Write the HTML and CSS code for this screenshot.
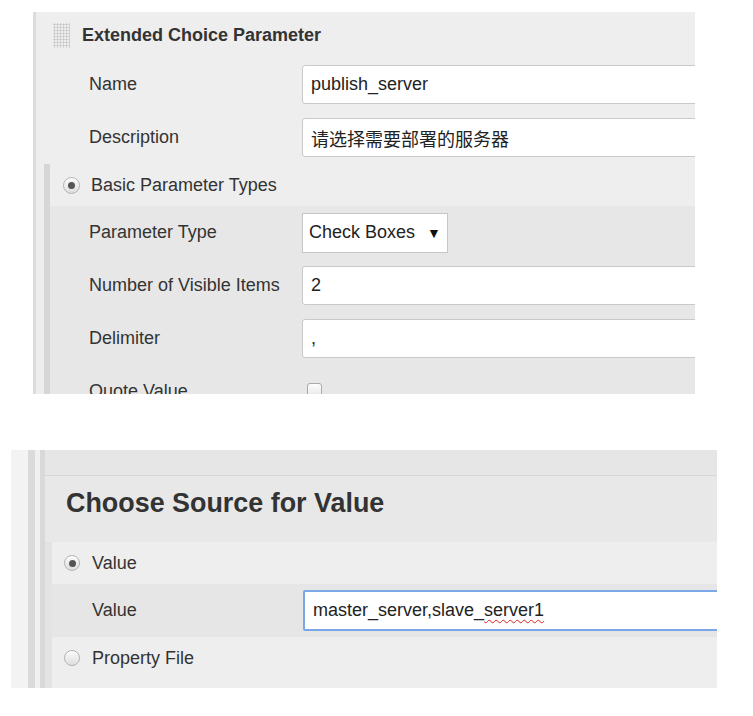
FILE: index.html
```html
<!DOCTYPE html>
<html lang="en">
<head>
<meta charset="utf-8">
<title>Extended Choice Parameter</title>
<link rel="stylesheet" href="styles.css">
</head>
<body>
<div class="page">
  <section class="panel panel-a">
    <div class="hdr">
      <span class="grip"></span>
      <span class="hdr-title">Extended Choice Parameter</span>
    </div>
    <div class="row row-a">
      <div class="lbl">Name</div>
      <div class="field">publish_server</div>
    </div>
    <div class="row row-a">
      <div class="lbl">Description</div>
      <div class="field">请选择需要部署的服务器</div>
    </div>
    <div class="nest-a">
      <div class="radio-row radio-row-a">
        <span class="radio checked"></span>
        <span>Basic Parameter Types</span>
      </div>
      <div class="sub-a">
        <div class="row row-sub">
          <div class="lbl">Parameter Type</div>
          <div class="select"><span>Check Boxes</span><span class="arrow">&#9660;</span></div>
        </div>
        <div class="row row-sub">
          <div class="lbl">Number of Visible Items</div>
          <div class="field">2</div>
        </div>
        <div class="row row-sub">
          <div class="lbl">Delimiter</div>
          <div class="field">,</div>
        </div>
        <div class="row row-sub">
          <div class="lbl">Quote Value</div>
          <div class="check-cell"><span class="checkbox"></span></div>
        </div>
      </div>
    </div>
  </section>

  <section class="panel panel-b">
    <div class="b-n1">
      <div class="b-n2">
        <div class="strip"></div>
        <div class="b-title">Choose Source for Value</div>
        <div class="b-n3">
          <div class="radio-row radio-row-b">
            <span class="radio checked"></span>
            <span>Value</span>
          </div>
          <div class="row row-b">
            <div class="lbl">Value</div>
            <div class="field field-focus">master_server,slave_<span class="spell">server1</span></div>
          </div>
          <div class="radio-row radio-row-b">
            <span class="radio"></span>
            <span>Property File</span>
          </div>
        </div>
      </div>
    </div>
  </section>
</div>
</body>
</html>
```

FILE: styles.css
```css
* { box-sizing: border-box; }

html, body {
  margin: 0;
  padding: 0;
  background: #ffffff;
}

body {
  font-family: "Liberation Sans", Arial, "Noto Sans CJK SC", sans-serif;
  font-size: 18px;
  color: #333333;
}

.page {
  padding-top: 12px;
  display: flex;
  flex-direction: column;
  align-items: flex-start;
}

.panel {
  overflow: hidden;
}

/* ---------- Panel A ---------- */
.panel-a {
  margin-left: 33px;
  width: 662px;
  height: 382px;
  background: #eeeeee;
  border-left: 3px solid #dcdcdc;
}

.hdr {
  height: 46px;
  display: flex;
  align-items: center;
  padding-left: 17px;
  gap: 12px;
}

.grip {
  width: 17px;
  height: 25px;
  margin-top: 1px;
  background-image: radial-gradient(circle, #c9c9c9 0.9px, transparent 1.3px);
  background-size: 3px 3px;
  background-position: 0 0;
}

.hdr-title {
  font-weight: bold;
  font-size: 18px;
  color: #333333;
}

.row {
  display: grid;
  align-items: center;
  height: 53px;
}

.row-a {
  grid-template-columns: 266px 1fr;
}

.row-a .lbl { padding-left: 53px; }

.field {
  width: 560px;
  height: 39px;
  background: #ffffff;
  border: 1px solid #c9c9c9;
  border-radius: 3px;
  padding-left: 8px;
  display: flex;
  align-items: center;
  white-space: nowrap;
  color: #222222;
}

.nest-a {
  margin-left: 8px;
  border-left: 6px solid #d6d6d6;
}

.radio-row {
  display: flex;
  align-items: center;
}

.radio-row-a {
  height: 42px;
  padding-left: 13px;
  gap: 11px;
}

.radio {
  width: 17px;
  height: 17px;
  border-radius: 50%;
  border: 1px solid #b3b3b3;
  background: linear-gradient(#fbfbfb, #dedede);
  box-shadow: inset 0 1px 1px rgba(255,255,255,0.8);
  display: flex;
  align-items: center;
  justify-content: center;
  flex: none;
}

.radio.checked::after {
  content: "";
  width: 7px;
  height: 7px;
  border-radius: 50%;
  background: #555555;
}

.sub-a {
  background: #e7e7e7;
}

.row-sub {
  grid-template-columns: 252px 1fr;
}

.row-sub .lbl { padding-left: 39px; }

.select {
  width: 146px;
  height: 40px;
  background: #ffffff;
  border: 1px solid #c6c6c6;
  padding-left: 6px;
  display: flex;
  align-items: center;
  gap: 12px;
  color: #222222;
}

.arrow {
  font-size: 14px;
  color: #111111;
}

.check-cell {
  padding-left: 5px;
  display: flex;
  align-items: center;
}

.checkbox {
  width: 15px;
  height: 16px;
  border: 1px solid #aaaaaa;
  border-radius: 3px;
  background: linear-gradient(#fdfdfd, #e4e4e4);
  margin-top: -2px;
}

/* ---------- Panel B ---------- */
.panel-b {
  margin-top: 56px;
  margin-left: 11px;
  width: 706px;
  height: 238px;
  background: #f3f3f3;
  padding-left: 17px;
}

.b-n1 {
  height: 100%;
  border-left: 7px solid #dadada;
  padding-left: 5px;
  background: #f0f0f0;
}

.b-n2 {
  height: 100%;
  border-left: 5px solid #d9d9d9;
  background: #e8e8e8;
  display: flex;
  flex-direction: column;
}

.strip {
  height: 26px;
  background: #e6e6e6;
  border-bottom: 1px solid #d8d8d8;
}

.b-title {
  height: 66px;
  padding-left: 21px;
  padding-bottom: 12px;
  display: flex;
  align-items: center;
  font-weight: bold;
  font-size: 26.9px;
  color: #333333;
  background: #e8e8e8;
}

.b-n3 {
  flex: 1;
  border-left: 7px solid #e3e3e3;
  background: #eeeeee;
}

.radio-row-b {
  height: 42px;
  padding-left: 12px;
  gap: 12px;
}

.radio-row-b .radio {
  width: 16px;
  height: 16px;
}

.row-b {
  grid-template-columns: 251px 1fr;
  background: #e6e6e6;
}

.row-b .lbl { padding-left: 40px; }

.field-focus {
  height: 41px;
  width: 480px;
  border: 2px solid #7aa7e8;
  border-radius: 2px;
  padding-left: 8px;
}

.spell {
  text-decoration: underline wavy #e02020;
  text-decoration-thickness: 1px;
  text-underline-offset: 3px;
}
```
